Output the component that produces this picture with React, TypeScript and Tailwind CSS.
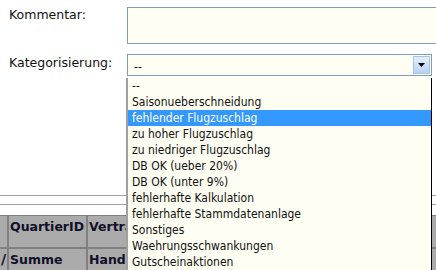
import React from "react";

const items = [
  "--",
  "Saisonueberschneidung",
  "fehlender Flugzuschlag",
  "zu hoher Flugzuschlag",
  "zu niedriger Flugzuschlag",
  "DB OK (ueber 20%)",
  "DB OK (unter 9%)",
  "fehlerhafte Kalkulation",
  "fehlerhafte Stammdatenanlage",
  "Sonstiges",
  "Waehrungsschwankungen",
  "Gutscheinaktionen",
];

export default function App() {
  return (
    <div
      className="relative w-[436px] h-[270px] overflow-hidden bg-white text-[12px] leading-[16px] text-[#111]"
      style={{ fontFamily: '"DejaVu Sans Condensed", "DejaVu Sans", Tahoma, sans-serif' }}
    >
      <div className="flex pt-[7px]">
        <div className="w-[127px] shrink-0 pl-[9px] text-[12.5px] font-['DejaVu_Sans',sans-serif]">Kommentar:</div>
        <div className="w-[330px] shrink-0 h-[37px] border border-[#7f9db9] bg-[#fefef2]" />
      </div>
      <div className="flex mt-[10px]">
        <div className="w-[127px] shrink-0 pl-[9px] pt-[1px] text-[12.5px] font-['DejaVu_Sans',sans-serif]">Kategorisierung:</div>
        <div className="w-[305px] shrink-0 h-[22px] border border-[#7f9db9] bg-[#fefef2] flex items-center p-[1px]">
          <div className="flex-1 pl-[5px] pt-[3px]">--</div>
          <div className="w-[17px] h-[18px] border border-[#a9c2e8] bg-gradient-to-b from-[#e6effc] to-[#b7d3f6] flex items-center justify-center">
            <svg width="8" height="5" viewBox="0 0 8 5">
              <path d="M0 0 H7 L3.5 4 Z" fill="#000" />
            </svg>
          </div>
        </div>
      </div>
      <div className="mt-[119px] h-[1px] bg-[#a0a0a0]" />
      <div className="mt-[8px] h-[1px] bg-[#a0a0a0]" />
      <div className="mt-[10px] bg-[#ababab] border-t border-[#808080] font-bold text-[#101028] text-[12.5px] font-['DejaVu_Sans',sans-serif]">
        <div className="flex h-[33px] border-b-2 border-[#808080]">
          <div className="w-[9px] border-r-2 border-[#808080]" />
          <div className="w-[79px] border-r-2 border-[#808080] pl-[1px] pt-[3px]">QuartierID</div>
          <div className="flex-1 pl-[1px] pt-[3px] whitespace-nowrap overflow-hidden">Vertragsnummer</div>
        </div>
        <div className="flex h-[30px]">
          <div className="w-[9px] border-r-2 border-[#808080] pt-[2px] pl-[1px] text-[14px]">/</div>
          <div className="w-[79px] border-r-2 border-[#808080] pl-[1px] pt-[3px]">Summe</div>
          <div className="flex-1 pl-[1px] pt-[3px] whitespace-nowrap overflow-hidden">Handling</div>
        </div>
      </div>
      <div className="absolute left-[126px] top-[78px] w-[306px] h-[200px] bg-[#fefef2] border-l-2 border-[#a0a0a0] border-r border-r-black">
        {items.map((t, i) => (
          <div
            key={t}
            className={
              "h-[16px] pl-[4px] whitespace-nowrap " +
              (i === 2 ? "bg-[#3399ff] text-white" : "text-[#111]")
            }
          >
            {t}
          </div>
        ))}
      </div>
    </div>
  );
}
